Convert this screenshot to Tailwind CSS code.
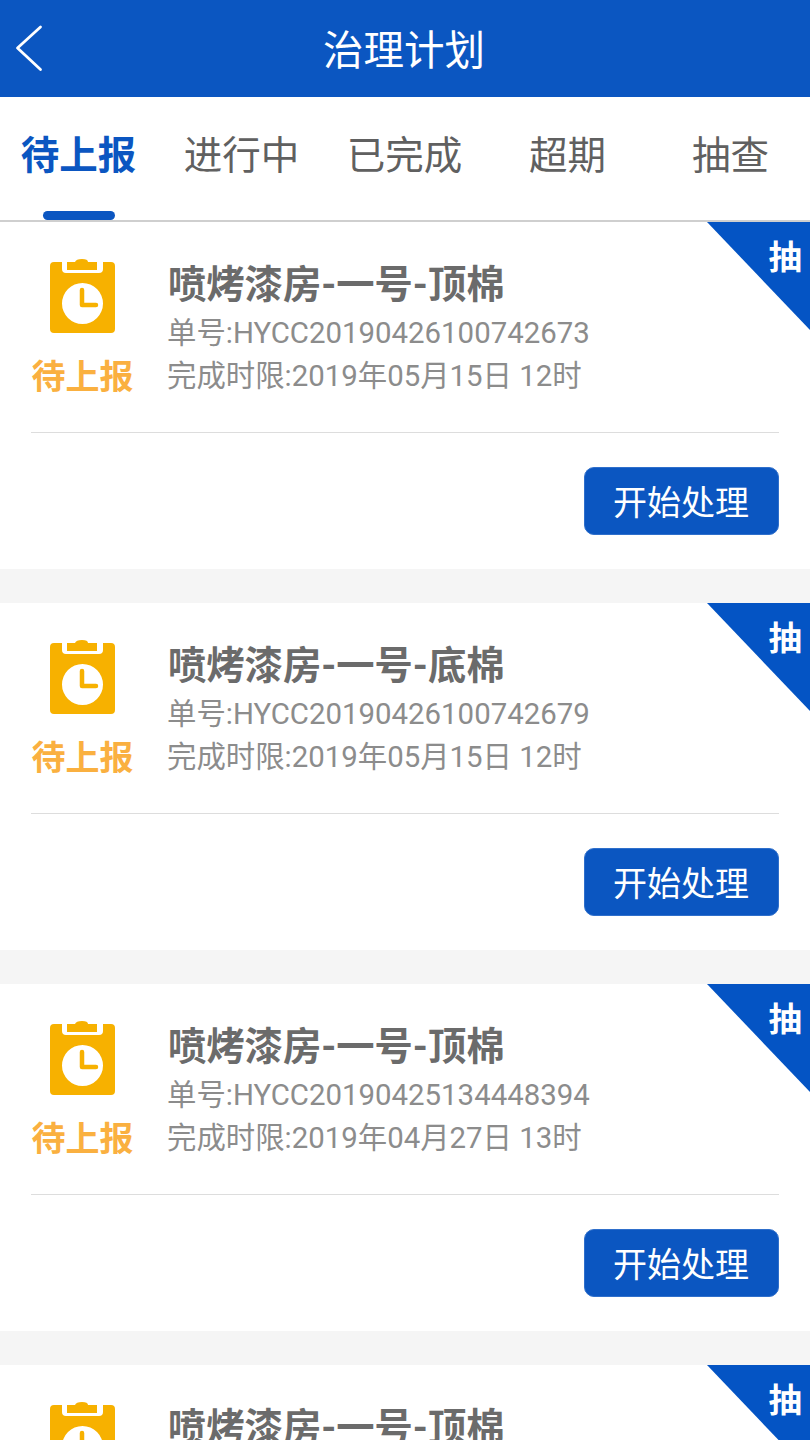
<!DOCTYPE html>
<html lang="zh">
<head>
<meta charset="utf-8">
<script src="https://cdn.jsdelivr.net/npm/@tailwindcss/browser@4"></script>
</head>
<body class="bg-[#f5f5f5]">
<div class="w-[810px] h-[1440px] overflow-hidden font-['Roboto','Noto_Sans_CJK_SC',sans-serif]">
  <header class="relative h-[97px] bg-[#0b56c1] flex items-center justify-center pt-[6px] pr-[2px] text-white text-[40.5px]">
    <svg class="absolute left-[14px] top-[24px] w-[32px] h-[48px]" viewBox="0 0 32 48" fill="none" stroke="white" stroke-width="2.8" stroke-linecap="round" stroke-linejoin="round"><path d="M26.5 3 L3.5 24 L26.5 45.5"/></svg>
    <span>治理计划</span>
  </header>
  <nav class="h-[125px] bg-white border-b-2 border-[#cfcfcf] overflow-hidden">
    <div class="grid grid-cols-[repeat(5,163px)] -ml-[3px] h-full text-[38.5px] text-[#606060]">
      <div class="relative flex justify-center pt-[31px] leading-[56px] font-bold text-[#0b56c1]">待上报<span class="absolute bottom-0 left-[46px] w-[72px] h-[9px] rounded-full bg-[#0b56c1]"></span></div>
      <div class="flex justify-center pt-[31px] leading-[56px]">进行中</div>
      <div class="flex justify-center pt-[31px] leading-[56px]">已完成</div>
      <div class="flex justify-center pt-[31px] leading-[56px]">超期</div>
      <div class="flex justify-center pt-[31px] leading-[56px]">抽查</div>
    </div>
  </nav>

  <div class="flex flex-col gap-[34px]">
    <article class="relative h-[347px] bg-white">
      <div class="absolute top-0 right-0 w-[103px] h-[108px] bg-[#0454c4] [clip-path:polygon(0_0,100%_0,100%_100%)]"><span class="absolute right-[8px] top-[14px] text-[33.5px] leading-[44px] font-bold text-white">抽</span></div>
      <div class="h-[210px] flex">
        <div class="w-[165px] flex flex-col items-center pt-[37px]">
          <svg class="w-[65px] h-[74px]" viewBox="0 0 65 74"><path fill="#f7b100" fill-rule="evenodd" d="M4 3h8v7q0 4 4 4h33q4 0 4-4V3h8q4 0 4 4v63q0 4-4 4H4q-4 0-4-4V7q0-4 4-4ZM32.5 24a20.5 20.5 0 1 0 0 41a20.5 20.5 0 1 0 0-41Z"/><path fill="#f7b100" d="M17 3h8q1-3 7-3t6 3h9v8H17Z"/><path fill="none" stroke="#f7b100" stroke-width="4.5" stroke-linecap="round" stroke-linejoin="round" d="M32 31v15h14"/></svg>
          <div class="mt-[20px] text-[34px] leading-[48px] font-bold text-[#fab040]">待上报</div>
        </div>
        <div class="pl-[3px] pt-[38px] text-[29.4px] text-[#8c8c8c]">
          <div class="text-[38.3px] leading-[50px] font-bold text-[#6b6b6b]">喷烤漆房-一号-顶棉</div>
          <div class="leading-[44px] mt-[1px] -ml-px">单号:HYCC20190426100742673</div>
          <div class="leading-[44px] -ml-px -mt-px">完成时限:2019年05月15日 12时</div>
        </div>
      </div>
      <div class="mx-[31px] border-t border-[#ddd] pt-[34px] flex justify-end">
        <button class="w-[195px] h-[68px] rounded-[10px] border border-[#2f6fcb] bg-[#0b56c1] pt-[5px] pr-px text-white text-[34px]">开始处理</button>
      </div>
    </article>

    <article class="relative h-[347px] bg-white">
      <div class="absolute top-0 right-0 w-[103px] h-[108px] bg-[#0454c4] [clip-path:polygon(0_0,100%_0,100%_100%)]"><span class="absolute right-[8px] top-[14px] text-[33.5px] leading-[44px] font-bold text-white">抽</span></div>
      <div class="h-[210px] flex">
        <div class="w-[165px] flex flex-col items-center pt-[37px]">
          <svg class="w-[65px] h-[74px]" viewBox="0 0 65 74"><path fill="#f7b100" fill-rule="evenodd" d="M4 3h8v7q0 4 4 4h33q4 0 4-4V3h8q4 0 4 4v63q0 4-4 4H4q-4 0-4-4V7q0-4 4-4ZM32.5 24a20.5 20.5 0 1 0 0 41a20.5 20.5 0 1 0 0-41Z"/><path fill="#f7b100" d="M17 3h8q1-3 7-3t6 3h9v8H17Z"/><path fill="none" stroke="#f7b100" stroke-width="4.5" stroke-linecap="round" stroke-linejoin="round" d="M32 31v15h14"/></svg>
          <div class="mt-[20px] text-[34px] leading-[48px] font-bold text-[#fab040]">待上报</div>
        </div>
        <div class="pl-[3px] pt-[38px] text-[29.4px] text-[#8c8c8c]">
          <div class="text-[38.3px] leading-[50px] font-bold text-[#6b6b6b]">喷烤漆房-一号-底棉</div>
          <div class="leading-[44px] mt-[1px] -ml-px">单号:HYCC20190426100742679</div>
          <div class="leading-[44px] -ml-px -mt-px">完成时限:2019年05月15日 12时</div>
        </div>
      </div>
      <div class="mx-[31px] border-t border-[#ddd] pt-[34px] flex justify-end">
        <button class="w-[195px] h-[68px] rounded-[10px] border border-[#2f6fcb] bg-[#0b56c1] pt-[5px] pr-px text-white text-[34px]">开始处理</button>
      </div>
    </article>

    <article class="relative h-[347px] bg-white">
      <div class="absolute top-0 right-0 w-[103px] h-[108px] bg-[#0454c4] [clip-path:polygon(0_0,100%_0,100%_100%)]"><span class="absolute right-[8px] top-[14px] text-[33.5px] leading-[44px] font-bold text-white">抽</span></div>
      <div class="h-[210px] flex">
        <div class="w-[165px] flex flex-col items-center pt-[37px]">
          <svg class="w-[65px] h-[74px]" viewBox="0 0 65 74"><path fill="#f7b100" fill-rule="evenodd" d="M4 3h8v7q0 4 4 4h33q4 0 4-4V3h8q4 0 4 4v63q0 4-4 4H4q-4 0-4-4V7q0-4 4-4ZM32.5 24a20.5 20.5 0 1 0 0 41a20.5 20.5 0 1 0 0-41Z"/><path fill="#f7b100" d="M17 3h8q1-3 7-3t6 3h9v8H17Z"/><path fill="none" stroke="#f7b100" stroke-width="4.5" stroke-linecap="round" stroke-linejoin="round" d="M32 31v15h14"/></svg>
          <div class="mt-[20px] text-[34px] leading-[48px] font-bold text-[#fab040]">待上报</div>
        </div>
        <div class="pl-[3px] pt-[38px] text-[29.4px] text-[#8c8c8c]">
          <div class="text-[38.3px] leading-[50px] font-bold text-[#6b6b6b]">喷烤漆房-一号-顶棉</div>
          <div class="leading-[44px] mt-[1px] -ml-px">单号:HYCC20190425134448394</div>
          <div class="leading-[44px] -ml-px -mt-px">完成时限:2019年04月27日 13时</div>
        </div>
      </div>
      <div class="mx-[31px] border-t border-[#ddd] pt-[34px] flex justify-end">
        <button class="w-[195px] h-[68px] rounded-[10px] border border-[#2f6fcb] bg-[#0b56c1] pt-[5px] pr-px text-white text-[34px]">开始处理</button>
      </div>
    </article>

    <article class="relative h-[347px] bg-white">
      <div class="absolute top-0 right-0 w-[103px] h-[108px] bg-[#0454c4] [clip-path:polygon(0_0,100%_0,100%_100%)]"><span class="absolute right-[8px] top-[14px] text-[33.5px] leading-[44px] font-bold text-white">抽</span></div>
      <div class="h-[210px] flex">
        <div class="w-[165px] flex flex-col items-center pt-[37px]">
          <svg class="w-[65px] h-[74px]" viewBox="0 0 65 74"><path fill="#f7b100" fill-rule="evenodd" d="M4 3h8v7q0 4 4 4h33q4 0 4-4V3h8q4 0 4 4v63q0 4-4 4H4q-4 0-4-4V7q0-4 4-4ZM32.5 24a20.5 20.5 0 1 0 0 41a20.5 20.5 0 1 0 0-41Z"/><path fill="#f7b100" d="M17 3h8q1-3 7-3t6 3h9v8H17Z"/><path fill="none" stroke="#f7b100" stroke-width="4.5" stroke-linecap="round" stroke-linejoin="round" d="M32 31v15h14"/></svg>
        </div>
        <div class="pl-[3px] pt-[38px] text-[29.4px] text-[#8c8c8c]">
          <div class="text-[38.3px] leading-[50px] font-bold text-[#6b6b6b]">喷烤漆房-一号-顶棉</div>
        </div>
      </div>
    </article>
  </div>
</div>
</body>
</html>
